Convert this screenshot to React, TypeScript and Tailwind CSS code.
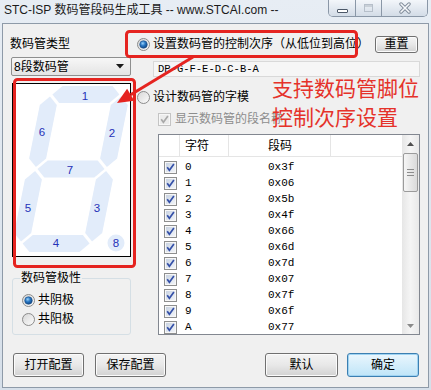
import React from "react";

const K = 0.2, CX = 58, CY = 85, W = 44, H = 83, T = 17, G = 2;
function pt(x: number, y: number) {
  return `${(CX + x - y * K).toFixed(1)},${(CY + y).toFixed(1)}`;
}
function hseg(yc: number) {
  const x1 = -W + T / 2 + G, x2 = W - T / 2 - G, d = T / 2;
  return [pt(x1, yc), pt(x1 + d, yc - d), pt(x2 - d, yc - d), pt(x2, yc), pt(x2 - d, yc + d), pt(x1 + d, yc + d)].join(" ");
}
function vseg(xc: number, y1: number, y2: number) {
  const d = T / 2;
  return [pt(xc, y1), pt(xc + d, y1 + d), pt(xc + d, y2 - d), pt(xc, y2), pt(xc - d, y2 - d), pt(xc - d, y1 + d)].join(" ");
}

function Radio({ checked }: { checked?: boolean }) {
  return (
    <svg width="13" height="13" viewBox="0 0 13 13" className="shrink-0">
      <defs>
        <linearGradient id="rbg" x1="0" y1="0" x2="1" y2="1">
          <stop offset="0" stopColor="#d6d6d6" />
          <stop offset="1" stopColor="#fdfdfd" />
        </linearGradient>
        <radialGradient id="rdot" cx="0.4" cy="0.35" r="0.7">
          <stop offset="0" stopColor="#9ad3fb" />
          <stop offset="0.45" stopColor="#2a78c4" />
          <stop offset="1" stopColor="#0b3f7c" />
        </radialGradient>
      </defs>
      <circle cx="6.5" cy="6.5" r="6" fill="url(#rbg)" stroke="#8b8b8b" />
      {checked && <circle cx="6.5" cy="6.5" r="3.8" fill="url(#rdot)" stroke="#1d4f86" strokeWidth="0.6" />}
    </svg>
  );
}

function Check({ disabled }: { disabled?: boolean }) {
  return (
    <svg width="13" height="13" viewBox="0 0 13 13" className="shrink-0">
      <defs>
        <linearGradient id="cbg" x1="0" y1="0" x2="1" y2="1">
          <stop offset="0" stopColor="#c9d3e2" />
          <stop offset="1" stopColor="#f1f4f8" />
        </linearGradient>
      </defs>
      <rect x="0.5" y="0.5" width="12" height="12" fill="#f7f7f7" stroke={disabled ? "#c4c4c4" : "#8e8f8f"} />
      <rect x="2" y="2" width="9" height="9" fill={disabled ? "#ececec" : "url(#cbg)"} />
      <path d="M3.2 6.2 L5.4 9.2 L9.9 3.1" fill="none" stroke={disabled ? "#a9a9a9" : "#3450a8"} strokeWidth="1.7" />
    </svg>
  );
}

function Btn({ children, className, primary }: { children: React.ReactNode; className: string; primary?: boolean }) {
  return (
    <div
      className={
        "h-[24px] flex items-center justify-center rounded-[3px] border text-[12px] " +
        (primary
          ? "border-[#3c7fb1] bg-gradient-to-b from-[#eaf6fd] to-[#bfe5f8] shadow-[inset_0_0_0_1px_#9fd3f2] "
          : "border-[#707070] bg-gradient-to-b from-[#f4f4f4] via-[#e8e8e8] to-[#d2d2d2] shadow-[inset_0_0_0_1px_#fbfbfb] ") +
        className
      }
    >
      {children}
    </div>
  );
}

const rows: [string, string][] = [
  ["0", "0x3f"], ["1", "0x06"], ["2", "0x5b"], ["3", "0x4f"], ["4", "0x66"], ["5", "0x6d"],
  ["6", "0x7d"], ["7", "0x07"], ["8", "0x7f"], ["9", "0x6f"], ["A", "0x77"],
];

const labels: [string, number, number][] = [
  ["1", 72, 12], ["6", 29, 48], ["2", 99, 49], ["7", 57, 86], ["5", 15, 124], ["3", 84, 124], ["4", 43, 159], ["8", 103, 159],
];

export default function App() {
  return (
    <div className="w-[431px] h-[390px] relative overflow-hidden flex flex-col bg-gradient-to-b from-[#e7edf4] to-[#d6dfe9] text-[12px] text-black font-['Liberation_Sans','Noto_Sans_CJK_SC',sans-serif]">
      {/* title bar */}
      <div className="h-[23px] shrink-0 flex items-start">
        <div className="pl-[4px] pt-[2px] leading-[16px] text-[12px] text-[#1b1b1b]">STC-ISP 数码管段码生成工具 -- www.STCAI.com --</div>
        <div className="ml-auto mr-[3px] flex h-[17px] border border-t-0 border-[#8a97a7] rounded-b-[5px] overflow-hidden">
          <div className="w-[27px] border-r border-[#8a97a7] flex items-end justify-center pb-[3px] bg-gradient-to-b from-[#f3f6fa] to-[#d3dce7]">
            <div className="w-[11px] h-[4px] border border-[#4c5868] bg-white rounded-[1px]" />
          </div>
          <div className="w-[26px] border-r border-[#8a97a7] flex items-center justify-center bg-gradient-to-b from-[#f3f6fa] to-[#d3dce7]">
            <div className="w-[9px] h-[8px] border border-[#b6bfca] shadow-[inset_0_2px_0_#c9d0d8]" />
          </div>
          <div className="w-[45px] flex items-center justify-center bg-gradient-to-b from-[#f3f6fa] to-[#d3dce7]">
            <svg width="14" height="12" viewBox="0 0 14 12">
              <path d="M3 2 L11 10 M11 2 L3 10" stroke="#7f8b99" strokeWidth="3.4" strokeLinecap="round" />
              <path d="M3 2 L11 10 M11 2 L3 10" stroke="#f6f8fb" strokeWidth="1.6" strokeLinecap="round" />
            </svg>
          </div>
        </div>
      </div>

      {/* client */}
      <div className="mx-[2px] h-[365px] border border-[#8e9aa8] bg-[#f0f0f0] flex flex-col">
        <div className="h-[329px] flex">
          {/* left column */}
          <div className="ml-[8px] w-[120px] flex flex-col">
            <div className="mt-[12px] h-[16px] leading-[16px] -ml-px">数码管类型</div>
            <div className="mt-[5px] h-[19px] w-[120px] border border-[#8e8f8f] rounded-[2px] bg-gradient-to-b from-[#f7f7f7] to-[#e4e4e4] flex items-center pl-[2px]">
              <span className="leading-[16px]">8段数码管</span>
              <svg width="8" height="5" viewBox="0 0 8 5" className="ml-auto mr-[6px]">
                <path d="M0 0 L8 0 L4 4.5 Z" fill="#1a1a1a" />
              </svg>
            </div>
            <div className="mt-[7px] ml-px w-[119px] h-[174px] border border-black bg-white">
              <svg width="117" height="172" viewBox="0 0 117 172" className="block">
                <g fill="#e2ecfa">
                  <polygon points={hseg(-H + T / 2)} />
                  <polygon points={hseg(0)} />
                  <polygon points={hseg(H - T / 2)} />
                  <polygon points={vseg(-W + T / 2, -H + T / 2 + G, -G)} />
                  <polygon points={vseg(W - T / 2, -H + T / 2 + G, -G)} />
                  <polygon points={vseg(-W + T / 2, G, H - T / 2 - G)} />
                  <polygon points={vseg(W - T / 2, G, H - T / 2 - G)} />
                  <circle cx="103" cy="159" r="8.5" />
                </g>
                {labels.map(([t, x, y]) => (
                  <text key={t} x={x} y={y + 4} textAnchor="middle" fontSize="11.5" fill="#2532b8" fontFamily="Liberation Sans, sans-serif">
                    {t}
                  </text>
                ))}
              </svg>
            </div>
            <fieldset className="mt-[13px] ml-px w-[119px] border border-[#d5dfe5] rounded-[3px] pb-[7px]">
              <legend className="ml-[7px] px-[1px] leading-[16px]">数码管极性</legend>
              <div className="mt-[6px] h-[16px] pl-[9px] flex items-center gap-[3px]">
                <Radio checked />
                <span className="leading-[16px]">共阴极</span>
              </div>
              <div className="mt-[3px] h-[16px] pl-[9px] flex items-center gap-[3px]">
                <Radio />
                <span className="leading-[16px]">共阳极</span>
              </div>
            </fieldset>
          </div>

          {/* right column */}
          <div className="ml-[6px] w-[283px] flex flex-col">
            <div className="mt-[11px] h-[18px] flex items-center">
              <Radio checked />
              <span className="ml-[3px] leading-[16px]">设置数码管的控制次序（从低位到高位）</span>
              <Btn className="ml-auto mr-[2px] w-[43px] !h-[17px]">重置</Btn>
            </div>
            <div className="mt-[8px] ml-[16px] w-[267px] h-[16px] border border-[#d9d9d9] bg-[#f6f6f6] flex items-center pl-[4px] font-['Liberation_Mono',monospace] text-[10.5px] leading-[14px]">
              DP-G-F-E-D-C-B-A
            </div>
            <div className="mt-[12px] h-[16px] flex items-center">
              <Radio />
              <span className="ml-[3px] leading-[16px]">设计数码管的字模</span>
            </div>
            <div className="mt-[6px] ml-[21px] h-[16px] flex items-center">
              <Check disabled />
              <span className="ml-[4px] leading-[16px] text-[#8d8d8d]">显示数码管的段名称</span>
            </div>
            <div className="mt-[7px] ml-[21px] w-[262px] h-[201px] border border-[#828790] bg-white flex overflow-hidden">
              <div className="flex-1 flex flex-col">
                <div className="h-[22px] shrink-0 flex border-b border-[#e5e5e5]">
                  <div className="w-[21px] border-r border-[#e5e5e5]" />
                  <div className="w-[49px] border-r border-[#e5e5e5] pl-[5px] flex items-center">字符</div>
                  <div className="w-[102px] border-r border-[#e5e5e5] pl-[39px] flex items-center">段码</div>
                  <div className="flex-1" />
                </div>
                <div className="mt-[2px] flex flex-col font-['Liberation_Mono',monospace] text-[11px]">
                  {rows.map(([c, v]) => (
                    <div key={c} className="h-[16px] shrink-0 flex items-center">
                      <div className="w-[21px] pl-[5px] flex items-center">
                        <Check />
                      </div>
                      <div className="w-[49px] pl-[5px]">{c}</div>
                      <div className="pl-[39px]">{v}</div>
                    </div>
                  ))}
                </div>
              </div>
              <div className="w-[17px] shrink-0 flex flex-col bg-gradient-to-r from-[#e6e6e6] via-[#f5f5f5] to-[#e9e9e9]">
                <div className="h-[17px] flex items-center justify-center">
                  <svg width="7" height="4" viewBox="0 0 7 4"><path d="M0 4 L3.5 0 L7 4 Z" fill="#4f4f4f" /></svg>
                </div>
                <div className="mt-px mx-[1px] h-[39px] rounded-[2px] border border-[#9b9b9b] bg-gradient-to-r from-[#f6f6f6] to-[#dadada] flex flex-col items-center justify-center gap-[2px]">
                  <div className="w-[7px] h-px bg-[#8c8c8c]" />
                  <div className="w-[7px] h-px bg-[#8c8c8c]" />
                  <div className="w-[7px] h-px bg-[#8c8c8c]" />
                </div>
                <div className="flex-1" />
                <div className="h-[17px] flex items-center justify-center">
                  <svg width="7" height="4" viewBox="0 0 7 4"><path d="M0 0 L7 0 L3.5 4 Z" fill="#8a8a8a" /></svg>
                </div>
              </div>
            </div>
          </div>
        </div>

        {/* bottom buttons */}
        <div className="h-[24px] flex">
          <Btn className="ml-[10px] w-[71px]">打开配置</Btn>
          <Btn className="ml-[11px] w-[71px]">保存配置</Btn>
          <Btn className="ml-auto w-[73px]">默认</Btn>
          <Btn primary className="ml-[9px] mr-[9px] w-[72px]">确定</Btn>
        </div>
      </div>

      {/* annotations overlay */}
      <svg width="431" height="390" viewBox="0 0 431 390" className="absolute left-0 top-0 pointer-events-none">
        <rect x="14.5" y="79.5" width="120" height="187" rx="3" fill="none" stroke="#e52420" strokeWidth="3" />
        <rect x="126.5" y="31.5" width="230" height="25" rx="3" fill="none" stroke="#e52420" strokeWidth="3" />
        <line x1="193" y1="57" x2="130.7" y2="94.7" stroke="#e52420" strokeWidth="3" />
        <polygon points="117,103 134.3,100.7 127.1,88.7" fill="#e52420" />
      </svg>
      <div className="absolute left-[272px] top-[73px] text-[21px] leading-[29px] text-[#e5322a] font-['Noto_Sans_CJK_SC',sans-serif]">
        <div>支持数码管脚位</div>
        <div>控制次序设置</div>
      </div>
    </div>
  );
}
